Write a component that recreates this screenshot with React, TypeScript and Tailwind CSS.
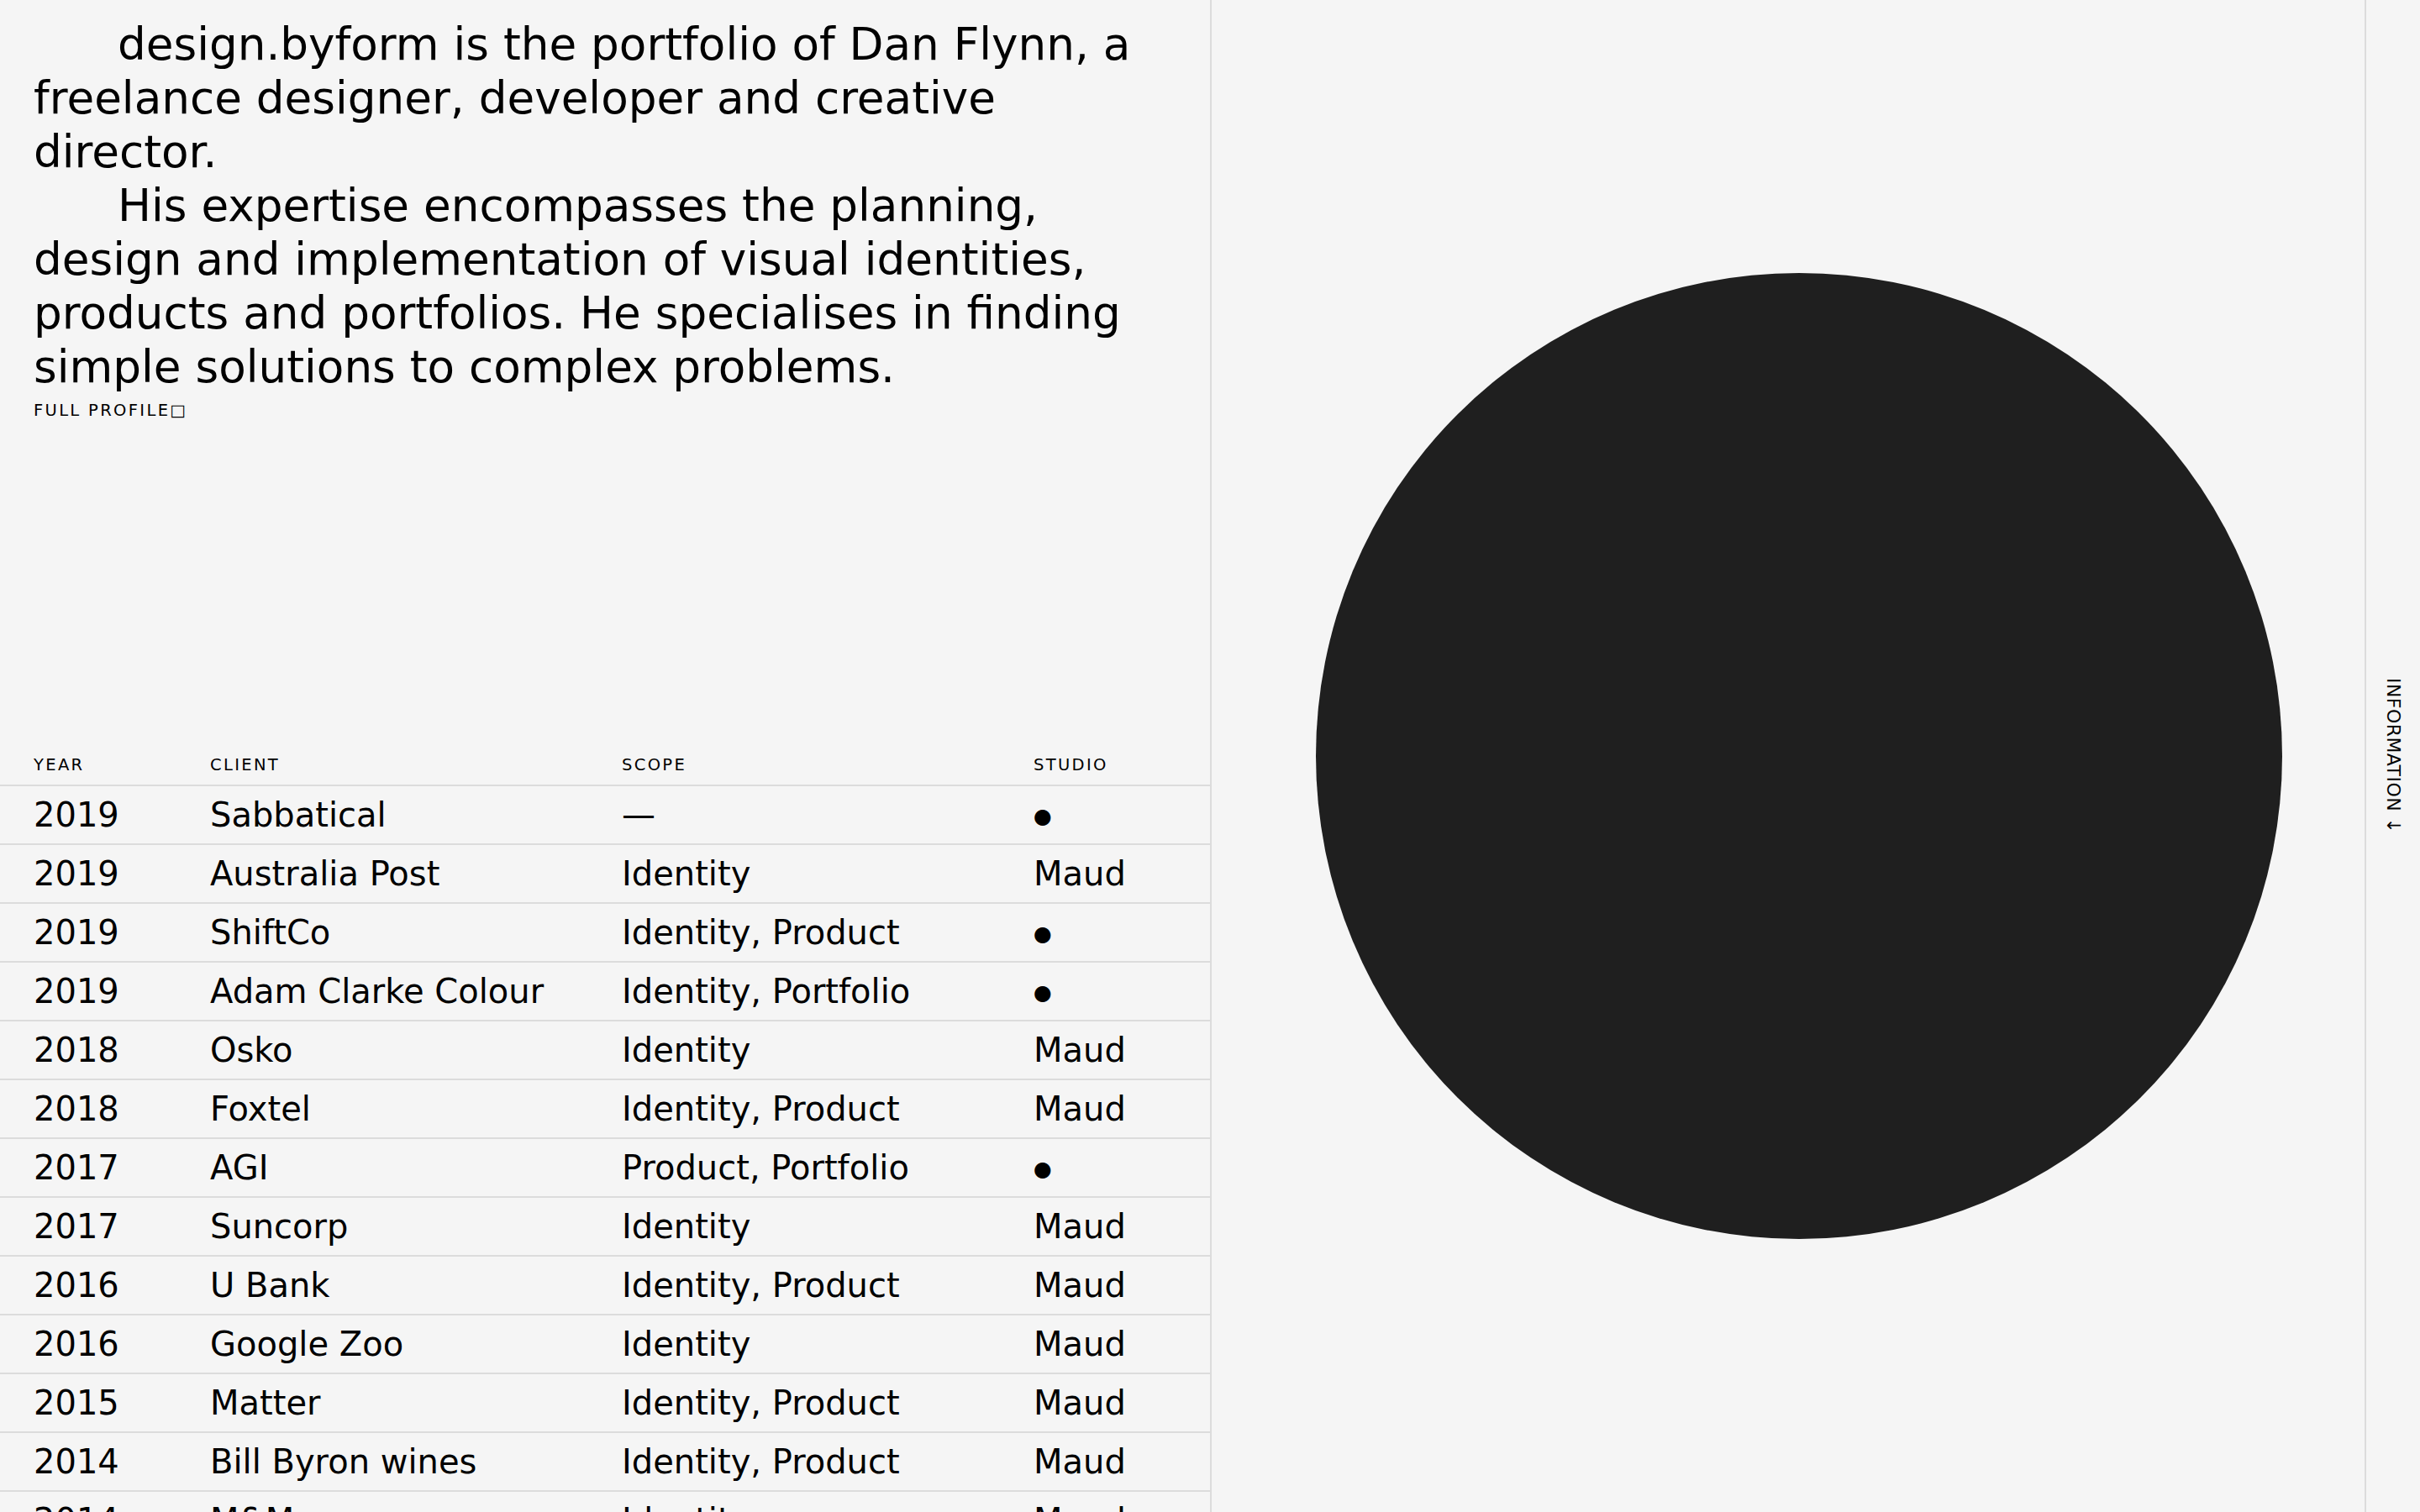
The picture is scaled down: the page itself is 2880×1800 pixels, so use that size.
import React from 'react';

type Project = {
  year: string;
  client: string;
  scope: string;
  studio: string;
};

const projects: Project[] = [
  { year: '2019', client: 'Sabbatical', scope: '—', studio: '●' },
  { year: '2019', client: 'Australia Post', scope: 'Identity', studio: 'Maud' },
  { year: '2019', client: 'ShiftCo', scope: 'Identity, Product', studio: '●' },
  { year: '2019', client: 'Adam Clarke Colour', scope: 'Identity, Portfolio', studio: '●' },
  { year: '2018', client: 'Osko', scope: 'Identity', studio: 'Maud' },
  { year: '2018', client: 'Foxtel', scope: 'Identity, Product', studio: 'Maud' },
  { year: '2017', client: 'AGI', scope: 'Product, Portfolio', studio: '●' },
  { year: '2017', client: 'Suncorp', scope: 'Identity', studio: 'Maud' },
  { year: '2016', client: 'U Bank', scope: 'Identity, Product', studio: 'Maud' },
  { year: '2016', client: 'Google Zoo', scope: 'Identity', studio: 'Maud' },
  { year: '2015', client: 'Matter', scope: 'Identity, Product', studio: 'Maud' },
  { year: '2014', client: 'Bill Byron wines', scope: 'Identity, Product', studio: 'Maud' },
  { year: '2014', client: 'M&M', scope: 'Identity', studio: 'Maud' },
];

const cols = 'grid grid-cols-[210px_490px_490px_1fr] px-[40px]';

const Intro: React.FC = () => (
  <section className="h-[900px] shrink-0 px-[40px] pt-[21px]">
    <div className="text-[53.2px] leading-[64px] text-black">
      <p className="indent-[100px]">
        design.byform is the portfolio of Dan Flynn, a freelance designer, developer and creative director.
      </p>
      <p className="indent-[100px]">
        His expertise encompasses the planning, design and implementation of visual identities, products and
        portfolios. He specialises in finding simple solutions to complex problems.
      </p>
    </div>
    <a href="#profile" className="mt-[9px] block text-[19.5px] leading-[22px] tracking-[0.12em] text-black uppercase">
      Full Profile<span className="tracking-normal">□</span>
    </a>
  </section>
);

const Studio: React.FC<{ value: string }> = ({ value }) =>
  value === '●' ? (
    <span className="relative -top-[4px] text-[25px] leading-none">●</span>
  ) : (
    <span>{value}</span>
  );

const ProjectTable: React.FC = () => (
  <div className="flex flex-col">
    <div className={`${cols} border-b-2 border-[#dcdcdc] pb-[12px] text-[19.5px] leading-[22px] tracking-[0.12em] uppercase`}>
      <span>Year</span>
      <span>Client</span>
      <span>Scope</span>
      <span>Studio</span>
    </div>
    {projects.map((p, i) => (
      <div
        key={i}
        className={`${cols} h-[70px] shrink-0 border-b-2 border-[#dcdcdc] pt-[10px] text-[40px] leading-[48px] whitespace-nowrap`}
      >
        <span>{p.year}</span>
        <span>{p.client}</span>
        <span>{p.scope}</span>
        <div>
          <Studio value={p.studio} />
        </div>
      </div>
    ))}
  </div>
);

export default function App() {
  return (
    <div className="flex h-[1800px] w-full overflow-hidden bg-[#f5f5f5] font-['DejaVu_Sans',sans-serif] text-black">
      <div className="flex w-[1442px] shrink-0 flex-col overflow-hidden border-r-2 border-[#dcdcdc]">
        <Intro />
        <ProjectTable />
      </div>
      <main className="flex flex-1 items-center justify-center pl-[26px]">
        <div className="h-[1150px] w-[1150px] shrink-0 rounded-full bg-[#1f1f1f]" />
      </main>
      <aside className="flex w-[66px] shrink-0 items-center justify-center border-l-2 border-[#dcdcdc]">
        <span className="text-[22px] tracking-[0.02em] [writing-mode:vertical-rl]">INFORMATION ↓</span>
      </aside>
    </div>
  );
}
